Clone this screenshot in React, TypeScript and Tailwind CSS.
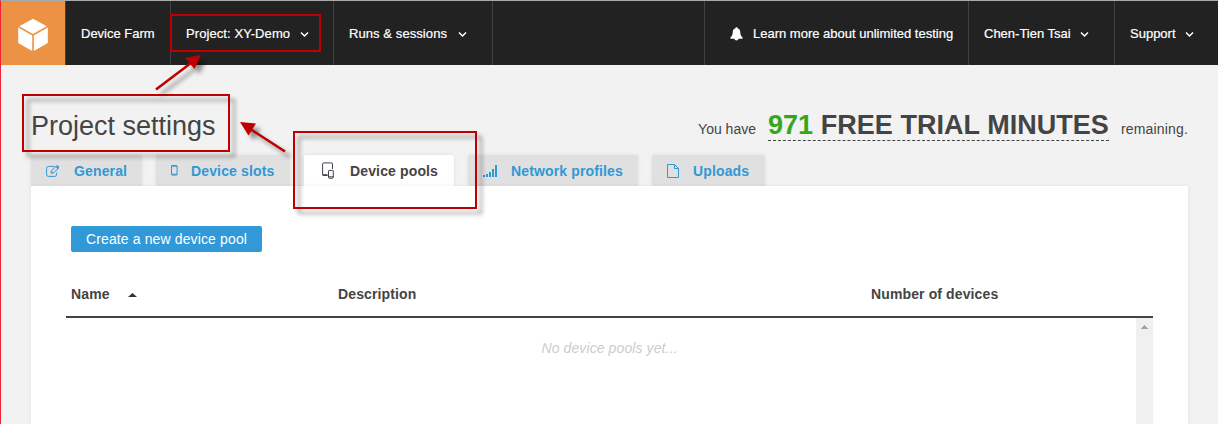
import type { ReactNode } from "react";

function Chevron() {
  return (
    <svg className="ml-[9px] block h-2 w-[9px] shrink-0" viewBox="0 0 9 8" fill="none" stroke="#fff" strokeWidth="1.5">
      <path d="M1 2.5 L4.5 6 L8 2.5" />
    </svg>
  );
}

function CubeLogo() {
  return (
    <svg className="h-[34px] w-[30px]" viewBox="0 0 30 34" fill="#fff">
      <path d="M15 0.8 L28.8 8.2 L15 16 L1.2 8.2 Z" />
      <path d="M0.2 9.6 L14.2 17.4 V33 L0.2 25 Z" />
      <path d="M29.8 9.6 L15.8 17.4 V33 L29.8 25 Z" />
    </svg>
  );
}

function BellIcon() {
  return (
    <svg className="mr-[10px] h-[14px] w-[13px]" viewBox="0 0 13 14" fill="#fff">
      <path d="M5.4 1.2 C5.4 -0.1 7.6 -0.1 7.6 1.2 C9.8 1.8 10.2 3.6 10.3 5.6 C10.4 8 11 9.2 12.6 10.4 V11.8 H8.6 C8.2 13.9 4.8 13.9 4.4 11.8 H0.4 V10.4 C2 9.2 2.6 8 2.7 5.6 C2.8 3.6 3.2 1.8 5.4 1.2 Z" />
    </svg>
  );
}

function EditIcon() {
  return (
    <svg className="h-3 w-[14px]" viewBox="0 0 14 12" fill="none" stroke="#3198d6">
      <path d="M8.5 1.4 H2.5 Q0.6 1.4 0.6 3.2 V9.5 Q0.6 11.4 2.5 11.4 H8.7 Q10.6 11.4 10.6 9.5 V7.6" />
      <path d="M5 8.2 L5.3 5.9 L10.8 0.6 L13 2.7 L7.4 8 Z M5.6 6.2 L7.2 7.8 M9.6 1.8 L11.8 3.9" />
      <path d="M11 1 L12.6 2.6" strokeWidth="2" />
    </svg>
  );
}

function PhoneIcon() {
  return (
    <svg className="h-[11px] w-[7px]" viewBox="0 0 7 11" fill="none" stroke="#3198d6">
      <rect x="0.5" y="0.5" width="5.6" height="9.6" rx="0.6" />
      <path d="M0.5 1.2 H6 M0.5 9.2 H6" />
    </svg>
  );
}

function DevicesIcon() {
  return (
    <svg className="h-[17px] w-3" viewBox="0 0 12 17" fill="none" stroke="#44404c">
      <path d="M5.5 13.5 H1.5 Q0.6 13.5 0.6 12.5 V2 Q0.6 0.9 1.6 0.9 H9.5 Q10.5 0.9 10.5 2 V7" />
      <path d="M0.6 12.9 H5.5" strokeWidth="1.4" />
      <rect x="6.5" y="8.4" width="4.8" height="7.8" rx="0.6" />
      <path d="M6.5 14.8 H11.3" />
    </svg>
  );
}

function SignalIcon() {
  return (
    <svg className="h-3 w-[14px]" viewBox="0 0 14 12" fill="#3198d6">
      <path d="M0 10h2v2H0zM3 9h2v3H3zM6 7h2v5H6zM9 4h2v8H9zM12 0h2v12h-2z" />
    </svg>
  );
}

function FileIcon() {
  return (
    <svg className="h-[14px] w-3" viewBox="0 0 12 14" fill="none" stroke="#3198d6">
      <path d="M0.5 0.5 H7.5 L11.5 4.5 V13.5 H0.5 Z M7.5 0.5 V4.5 H11.5" />
    </svg>
  );
}

function NavItem({ className, children }: { className: string; children: ReactNode }) {
  return <div className={"flex h-full shrink-0 items-center whitespace-nowrap border-[#414141] pt-px " + className}>{children}</div>;
}

function Tab({ className, icon, children }: { className: string; icon: ReactNode; children: ReactNode }) {
  return (
    <div className={"flex h-[31px] items-center whitespace-nowrap rounded-t-[2px] text-[14px] font-bold tracking-[0.14px] shadow-[0_0_4px_rgba(0,0,0,0.08)] " + className}>
      <span className="flex w-7 shrink-0 items-center">{icon}</span>
      <span className="pt-[2px]">{children}</span>
    </div>
  );
}

function Annotations() {
  return (
    <div className="pointer-events-none absolute inset-0">
      <div className="absolute left-[170px] top-[14px] h-[38px] w-[151px] border-2 border-[#c00000]" />
      <svg className="absolute inset-0 h-[424px] w-[1218px]" viewBox="0 0 1218 424">
        <g fill="none" stroke="#c00000" strokeWidth="2" className="drop-shadow-[5px_5px_2px_rgba(0,0,0,0.4)]">
          <rect x="23" y="95" width="206" height="56" />
          <rect x="294" y="132" width="182" height="76" />
        </g>
        <g fill="#c00000" stroke="#c00000" className="drop-shadow-[5px_5px_2px_rgba(0,0,0,0.4)]">
          <path d="M156 89.5 L191 63" strokeWidth="2.6" />
          <path d="M201 55 L185 58 L194.5 69 Z" stroke="none" />
          <path d="M285 151.5 L251 129.5" strokeWidth="2.6" />
          <path d="M240 122 L256 123.5 L248.5 135.5 Z" stroke="none" />
        </g>
      </svg>
    </div>
  );
}

export default function App() {
  return (
    <div className="relative flex h-[424px] w-[1218px] flex-col overflow-hidden border-l border-t border-l-[#ee2337] border-t-[#a9abab] bg-[#f2f2f2] font-['Liberation_Sans',Arial,sans-serif] text-[#444]">
      <header className="flex h-16 shrink-0 bg-[#222] text-[13px] text-white [-webkit-text-stroke:0.2px_#fff]">
        <div className="flex w-16 shrink-0 items-center justify-center bg-[#eb9245] pt-1">
          <CubeLogo />
        </div>
        <NavItem className="w-[106px] border-l border-r pl-[15px]">Device Farm</NavItem>
        <NavItem className="w-[163px] border-r pl-[15px]">
          <span className="mr-px tracking-[0.08px]">Project: XY-Demo</span>
          <Chevron />
        </NavItem>
        <NavItem className="w-[159px] border-r pl-[15px]">
          <span className="mr-[2px] tracking-[0.08px]">Runs &amp; sessions</span>
          <Chevron />
        </NavItem>
        <NavItem className="ml-auto w-[265px] border-l border-r pl-[25px]">
          <BellIcon />
          Learn more about unlimited testing
        </NavItem>
        <NavItem className="w-[146px] border-r pl-[15px]">
          Chen-Tien Tsai
          <Chevron />
        </NavItem>
        <NavItem className="w-[103px] pl-[15px]">
          Support
          <Chevron />
        </NavItem>
      </header>

      <main className="flex grow flex-col pl-[30px] pr-[30px]">
        <div className="flex h-[90px] shrink-0 items-start justify-between">
          <h1 className="mt-[46px] text-[27px] leading-[31px]">Project settings</h1>
          <p className="mt-[45px] flex items-baseline whitespace-nowrap text-[14px]">
            You have
            <span className="ml-3 mr-3 border-b border-dashed border-[#444] text-[27px] font-bold leading-[30px] tracking-[0.04px]">
              <span className="text-[#36a71d]">971</span> FREE TRIAL MINUTES
            </span>
            <span className="tracking-[0.17px]">remaining.</span>
          </p>
        </div>

        <nav className="flex shrink-0 text-[#3198d6]">
          <Tab className="w-[111px] bg-[#e0e0e0] pl-[15px]" icon={<EditIcon />}>General</Tab>
          <Tab className="ml-[14px] w-[134px] bg-[#e0e0e0] pl-[15px]" icon={<PhoneIcon />}>
            <span className="-ml-2">Device slots</span>
          </Tab>
          <Tab className="ml-[14px] w-[150px] bg-white pl-[18px] text-[#444]" icon={<DevicesIcon />}>Device pools</Tab>
          <Tab className="ml-[14px] w-[170px] bg-[#e0e0e0] pl-[15px]" icon={<SignalIcon />}>Network profiles</Tab>
          <Tab className="ml-[14px] w-[113px] bg-[#e0e0e0] pl-[15px]" icon={<FileIcon />}>
            <span className="-ml-[2px]">Uploads</span>
          </Tab>
        </nav>

        <section className="relative flex w-[1157px] grow flex-col bg-white pl-[35px] pr-[35px] pt-10 shadow-[0_0_4px_rgba(0,0,0,0.08)]">
          <button className="ml-[5px] h-[26px] w-[191px] shrink-0 rounded-[2px] bg-[#3199d8] text-[14px] tracking-[0.13px] text-white">
            Create a new device pool
          </button>
          <div className="mt-[19px] flex h-[47px] shrink-0 items-center border-b-2 border-[#444] pl-[5px] pt-[2px] text-[14px] font-bold tracking-[0.12px]">
            <span className="flex w-[267px] items-center">
              Name
              <svg className="ml-[18px] h-[4px] w-[9px]" viewBox="0 0 9 4" fill="#333">
                <path d="M0 4 L4.5 0 L9 4 Z" />
              </svg>
            </span>
            <span className="w-[533px]">Description</span>
            <span>Number of devices</span>
          </div>
          <div className="flex grow">
            <p className="grow pl-[17px] pt-[20px] text-center text-[14px] italic leading-5 tracking-[0.1px] text-[#ccc]">No device pools yet...</p>
            <div className="flex w-[17px] justify-center bg-[#f0f0f0] pt-[7px]">
              <svg className="h-1 w-[7px]" viewBox="0 0 7 4" fill="#a3a3a3" shapeRendering="crispEdges">
                <path d="M3 0h1v1h1v1h1v1h1v1H0V3h1V2h1V1h1z" />
              </svg>
            </div>
          </div>
        </section>
      </main>
      <div className="absolute -left-px -top-px h-[424px] w-[1218px]">
        <Annotations />
      </div>
    </div>
  );
}
